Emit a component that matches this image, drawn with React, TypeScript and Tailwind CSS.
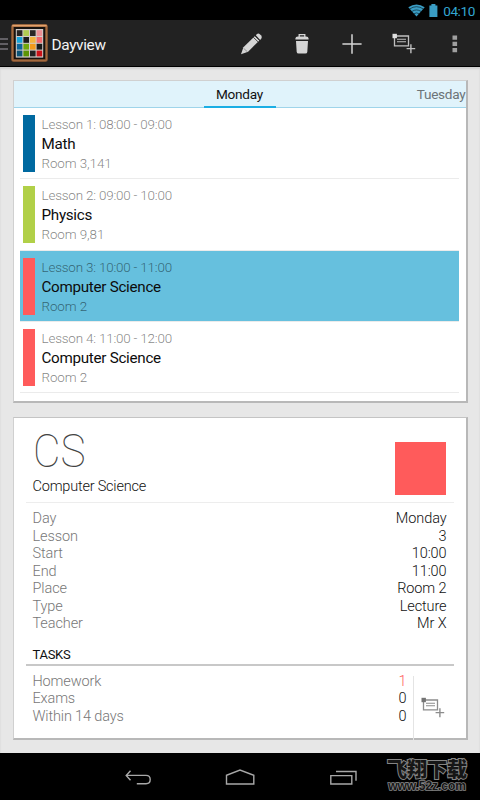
import React from "react";

const lessons = [
  { time: "Lesson 1: 08:00 - 09:00", name: "Math", room: "Room 3,141", bar: "bg-[#0069a0]" },
  { time: "Lesson 2: 09:00 - 10:00", name: "Physics", room: "Room 9,81", bar: "bg-[#b1d048]" },
  { time: "Lesson 3: 10:00 - 11:00", name: "Computer Science", room: "Room 2", bar: "bg-[#ff5b5b]", selected: true },
  { time: "Lesson 4: 11:00 - 12:00", name: "Computer Science", room: "Room 2", bar: "bg-[#ff5b5b]" },
];

const details = [
  ["Day", "Monday"],
  ["Lesson", "3"],
  ["Start", "10:00"],
  ["End", "11:00"],
  ["Place", "Room 2"],
  ["Type", "Lecture"],
  ["Teacher", "Mr X"],
];

const logoColors = [
  "#2a2624", "#b1cc52", "#2a2624", "#ec8f95",
  "#17a5dc", "#1c1c1c", "#f3b33d", "#f3686c",
  "#0b659b", "#70a80c", "#f29a1c", "#1c1c1c",
  "#0d5478", "#5c9405", "#222222", "#cb1118",
];

function Logo() {
  return (
    <svg width="37" height="38" viewBox="0 0 37 38" className="shrink-0">
      <rect x="0.3" y="0.3" width="36.4" height="37.4" rx="2" fill="#8f5a33" />
      <rect x="1.3" y="1.3" width="34.4" height="35.4" rx="1.5" fill="none" stroke="#a86d42" strokeWidth="1" />
      <path d="M1.3 1.6h34.4" stroke="#e2a06a" strokeWidth="1.6" />
      <rect x="2.8" y="3" width="31.4" height="32.2" fill="#17120f" />
      <rect x="4.8" y="5" width="27.4" height="28.6" fill="#d2ccc8" />
      {logoColors.map((c, i) => (
        <rect key={i} x={5.8 + (i % 4) * 6.6} y={6.2 + Math.floor(i / 4) * 6.8} width="5.6" height="5.8" fill={c} />
      ))}
    </svg>
  );
}

function AddTask({ stroke, node }: { stroke: string; node: string }) {
  return (
    <svg width="24" height="22" viewBox="0 0 24 22" fill="none" className="shrink-0">
      <path d="M2.5 3h14v9.8h-14z" stroke={stroke} strokeWidth="1.3" />
      <path d="M5 6.2h9M5 8.8h9" stroke={stroke} strokeWidth="1.1" />
      <rect x="0.5" y="0.8" width="4.4" height="4.4" fill={node} />
      <path d="M18.9 11.2v9M14.6 15.6h8.6" stroke={stroke} strokeWidth="1.4" />
    </svg>
  );
}

function StatusBar() {
  return (
    <div className="flex h-5 items-center justify-end bg-black pr-[5px] text-[#33a5d0]">
      <svg width="17" height="13" viewBox="0 0 17 13">
        <path d="M8.5 12.6L0.3 3.2Q8.5 -2.4 16.7 3.2z" fill="#3a9dc4" />
        <path d="M1.6 5Q8.5 0.4 15.4 5M3.8 7.5Q8.5 4.4 13.2 7.5M5.8 9.8Q8.5 8 11.2 9.8" fill="none" stroke="#0a2733" strokeWidth="0.7" />
      </svg>
      <svg width="9" height="13" viewBox="0 0 9 13" className="ml-[4px]">
        <path d="M2.4 0h4v1.4h2V13H0.4V1.4h2z" fill="#3a9dc4" />
      </svg>
      <span className="ml-[5px] mt-[2px] w-[32px] text-right text-[13.6px] leading-[18px] tracking-[-0.4px] whitespace-nowrap">04:10</span>
    </div>
  );
}

function ActionBar() {
  return (
    <div className="flex h-[47px] items-center border-b border-black bg-[#222222]">
      <svg width="8" height="14" viewBox="0 0 8 14" className="mt-[2px] shrink-0">
        <path d="M0 2h8M0 7h8M0 12h8" stroke="#77747b" strokeWidth="1.4" />
      </svg>
      <div className="ml-[2.5px] flex"><Logo /></div>
      <span className="ml-[4px] mt-[3px] w-[187.5px] text-[15.4px] leading-[22px] tracking-[-0.35px] text-[#f3f3f3] whitespace-nowrap">Dayview</span>
      <svg width="24" height="24" viewBox="0 0 24 24" className="mt-px ml-px shrink-0">
        <path d="M1 22.3l2.4-7L15 4l4.4 4.4L8.1 19.8z" fill="#d5d5d5" />
        <path d="M15.8 3.2l1.2-1.3q1.5-1 3.1.5l1.1 1.2q1.2 1.6.1 3l-1.1 1.3z" fill="#d5d5d5" />
        <path d="M13.3 5.3l5 4.8M14.8 3.8l5 4.9" stroke="#222222" strokeWidth="0.8" />
        <path d="M3.6 16.3l3.7 3.4" stroke="#777" strokeWidth="0.7" />
      </svg>
      <svg width="14" height="20" viewBox="0 0 14 20" className="mt-px ml-[30.5px] shrink-0">
        <path d="M4.2 3V0.7h5.6V3" stroke="#d5d5d5" strokeWidth="1.3" fill="none" />
        <path d="M0.4 5.6V4.5Q0.4 2.6 3 2.6h8q2.6 0 2.6 1.9v1.1zM1 7h12l-.7 11q-.1 1.5-2 1.5H3.7q-1.9 0-2-1.5z" fill="#d5d5d5" />
      </svg>
      <svg width="20" height="20" viewBox="0 0 20 20" className="mt-px ml-[33.5px] shrink-0">
        <path d="M10 0.3v19.4M0.4 10h19.2" stroke="#d5d5d5" strokeWidth="1.5" />
      </svg>
      <div className="mt-[2px] ml-[29.5px] flex"><AddTask stroke="#c0c0c0" node="#e0e0e0" /></div>
      <svg width="6" height="18" viewBox="0 0 6 18" className="mt-[2px] ml-[36px] shrink-0">
        <path d="M0.5 0.5h4.6v4.2H0.5zM0.5 6.8h4.6V11H0.5zM0.5 13h4.6v4.2H0.5z" fill="#a0a0a0" />
      </svg>
    </div>
  );
}

function DayCard() {
  return (
    <section className="h-[323px] border border-b-2 border-r-2 border-[#d0d0d0] border-r-[#b8b8b8] border-b-[#b8b8b8] bg-white">
      <div className="flex h-[27px] justify-between border-b border-[#9fd4ea] bg-[#e0f3fb]">
        <div className="ml-[190px] h-[27px] w-[72px] border-b-2 border-[#1baee4] text-center text-[13.6px] leading-[27px] tracking-[-0.25px] text-[#111]">Monday</div>
        <div className="text-[13.6px] leading-[27px] tracking-[-0.25px] text-[#6c7478]">Tuesday</div>
      </div>
      <div className="pl-[6px] pr-[7px]">
        {lessons.map((l) => (
          <div
            key={l.time}
            className={"flex h-[71.25px] border-b border-[#ebebeb] pl-[3px] pt-[7px] " + (l.selected ? "bg-[#66c0de]" : "bg-white")}
          >
            <div className={"h-[57px] w-[12px] " + l.bar} />
            <div className="ml-[7px] whitespace-nowrap">
              <div className="h-[19px] text-[13.4px] font-light leading-[20px] tracking-[-0.18px] text-black/50">{l.time}</div>
              <div className="h-[20px] text-[15.2px] leading-[21px] tracking-[-0.28px] text-[#0c0c0c]">{l.name}</div>
              <div className="h-[19px] text-[13.4px] font-light leading-[19px] tracking-[-0.08px] text-black/50">{l.room}</div>
            </div>
          </div>
        ))}
      </div>
    </section>
  );
}

function DetailCard() {
  return (
    <section className="mt-[14px] h-[323px] border border-b-2 border-r-2 border-[#c4c4c4] border-l-[#d0d0d0] border-r-[#b8b8b8] border-b-[#b8b8b8] bg-white px-[12px]">
      <div className="flex h-[85px] justify-between border-b border-[#ededed] px-[7px]">
        <div className="pt-[8px]">
          <div className="h-[51px] w-[60px] origin-left scale-x-[0.9] text-[47px] font-thin leading-[49px] text-[#444]">CS</div>
          <div className="text-[14.5px] font-light leading-[20px] tracking-[-0.2px] text-[#111]">Computer Science</div>
        </div>
        <div className="mt-[24px] mr-[0.5px] h-[53px] w-[51px] bg-[#ff5b5b]" />
      </div>
      <div className="px-[7px] pt-[7px]">
        {details.map(([k, v]) => (
          <div key={k} className="flex h-[17.5px] justify-between text-[14.5px] font-light leading-[17.5px] tracking-[-0.1px]">
            <span className="text-[#777]">{k}</span>
            <span className="text-[#111]">{v}</span>
          </div>
        ))}
      </div>
      <div className="mt-[11px] h-[22px] border-b-2 border-[#c8c8c8] px-[7px] text-[13px] leading-[21px] tracking-[-0.3px] text-[#111]">TASKS</div>
      <div className="flex h-[74px]">
        <div className="w-[381px] pl-[7px] pt-[7px]">
          {[["Homework", "1"], ["Exams", "0"], ["Within 14 days", "0"]].map(([k, v]) => (
            <div key={k} className="flex h-[17.5px] justify-between text-[14.5px] font-light leading-[17.5px] tracking-[-0.15px]">
              <span className="text-[#777]">{k}</span>
              <span className={v === "1" ? "text-[#ff5b5b]" : "text-[#111]"}>{v}</span>
            </div>
          ))}
        </div>
        <div className="ml-[6px] mt-[10px] w-px bg-[#e4e4e4]" />
        <div className="ml-[7.5px] mt-[31px]"><AddTask stroke="#8c8c8c" node="#747474" /></div>
      </div>
    </section>
  );
}

function NavBar() {
  return (
    <div className="flex h-[47px] bg-black">
      <svg width="27" height="16" viewBox="0 0 27 16" className="ml-[124px] mt-[17px]" fill="none" stroke="#a8a8a8" strokeWidth="1.4">
        <path d="M6.5 0.8L2.2 5.4l4.3 4.8M2.2 5.4H22q4.2 0 4.2 4.1 0 4.2-4.2 4.2h-9.2" />
      </svg>
      <svg width="30" height="17" viewBox="0 0 30 17" className="ml-[74px] mt-[16px]" fill="none" stroke="#a8a8a8" strokeWidth="1.4">
        <path d="M1.5 15V6.3L15 1l13.8 5.3V15z" />
      </svg>
      <svg width="28" height="16" viewBox="0 0 28 16" className="ml-[74px] mt-[17px]" fill="none" stroke="#a8a8a8" strokeWidth="1.4">
        <path d="M1.8 5.6h21v8.4h-21zM7 1.5h20v9.2" />
      </svg>
      <div className="ml-[29px] mt-[5px] w-[82px] text-center font-bold whitespace-nowrap text-[#161616] [paint-order:stroke_fill]">
        <div className="h-[22px] font-['Noto_Sans_CJK_SC',sans-serif] text-[20px] font-black leading-[21px] [-webkit-text-stroke:2px_#858585]">飞翔下载</div>
        <div className="h-[13px] font-['Liberation_Sans',sans-serif] text-[12px] leading-[13px] tracking-[-0.05px] [-webkit-text-stroke:1.6px_#858585]">www.52z.com</div>
      </div>
    </div>
  );
}

export default function App() {
  return (
    <div className="flex h-[800px] w-[480px] flex-col overflow-hidden bg-[#e7e7e7] font-['Roboto',sans-serif]">
      <StatusBar />
      <ActionBar />
      <main className="flex-1 pl-[12.5px] pr-[12.5px] pt-[13px] shadow-[inset_0_2px_2px_#cfcfcf]">
        <DayCard />
        <DetailCard />
      </main>
      <NavBar />
    </div>
  );
}
